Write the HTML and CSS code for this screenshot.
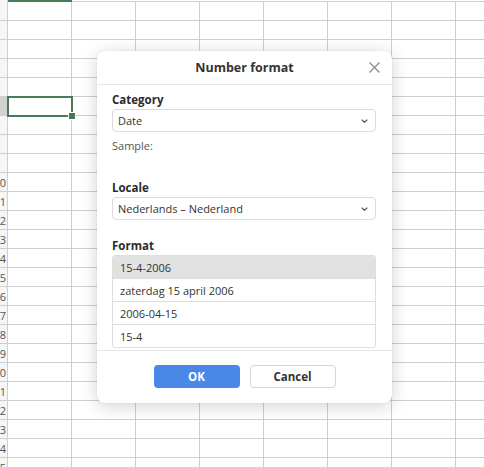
FILE: index.html
```html
<!DOCTYPE html>
<html>
<head>
<meta charset="utf-8">
<link rel="stylesheet" href="styles.css">
</head>
<body>
<div class="sheet">
  <div class="corner"></div>
  <div class="colhead"><div class="ch-sel"></div></div>
  <div class="rowheads">
    <div class="rh"><span>1</span></div>
    <div class="rh"><span>2</span></div>
    <div class="rh"><span>3</span></div>
    <div class="rh"><span>4</span></div>
    <div class="rh"><span>5</span></div>
    <div class="rh rh-sel"><span>6</span></div>
    <div class="rh"><span>7</span></div>
    <div class="rh"><span>8</span></div>
    <div class="rh"><span>9</span></div>
    <div class="rh"><span>10</span></div>
    <div class="rh"><span>11</span></div>
    <div class="rh"><span>12</span></div>
    <div class="rh"><span>13</span></div>
    <div class="rh"><span>14</span></div>
    <div class="rh"><span>15</span></div>
    <div class="rh"><span>16</span></div>
    <div class="rh"><span>17</span></div>
    <div class="rh"><span>18</span></div>
    <div class="rh"><span>19</span></div>
    <div class="rh"><span>20</span></div>
    <div class="rh"><span>21</span></div>
    <div class="rh"><span>22</span></div>
    <div class="rh"><span>23</span></div>
    <div class="rh"><span>24</span></div>
    <div class="rh"><span>25</span></div>
  </div>
  <div class="grid">
    <div class="cell-active"></div>
  </div>
</div>

<div class="dialog">
  <div class="dlg-head">
    <span class="dlg-title">Number format</span>
    <button class="dlg-close" aria-label="Close">
      <svg width="11" height="11" viewBox="0 0 11 11"><path d="M0.5 0.5L10.5 10.5M10.5 0.5L0.5 10.5" stroke="#8a8a8a" stroke-width="1.2" fill="none"/></svg>
    </button>
  </div>
  <div class="dlg-body">
    <div class="label">Category</div>
    <div class="select"><span>Date</span><svg class="chev" width="7" height="4" viewBox="0 0 7 4"><path d="M0.6 0.6L3.5 3.3L6.4 0.6" stroke="#555" stroke-width="1.2" fill="none"/></svg></div>
    <div class="sample">Sample:</div>
    <div class="label label-locale">Locale</div>
    <div class="select"><span>Nederlands – Nederland</span><svg class="chev" width="7" height="4" viewBox="0 0 7 4"><path d="M0.6 0.6L3.5 3.3L6.4 0.6" stroke="#555" stroke-width="1.2" fill="none"/></svg></div>
    <div class="label label-format">Format</div>
    <div class="list">
      <div class="item item-sel">15-4-2006</div>
      <div class="item">zaterdag 15 april 2006</div>
      <div class="item">2006-04-15</div>
      <div class="item">15-4</div>
    </div>
  </div>
  <div class="dlg-foot">
    <button class="btn btn-ok">OK</button>
    <button class="btn btn-cancel">Cancel</button>
  </div>
</div>
</body>
</html>
```
FILE: styles.css
```css
* { box-sizing: border-box; }
html, body { margin: 0; padding: 0; }
body {
  width: 484px;
  height: 467px;
  overflow: hidden;
  background: #fff;
  font-family: "Open Sans", "Noto Sans", sans-serif;
  color: #333;
  position: relative;
}

/* spreadsheet */
.sheet {
  display: grid;
  grid-template-columns: 8px 1fr;
  grid-template-rows: 2px 1fr;
  width: 484px;
  height: 467px;
}
.corner { background: #f6f6f6; border-right: 1px solid #cfcfcf; }
.colhead { border-bottom: 1px solid #cfcfcf; }
.ch-sel { width: 64px; height: 2px; background: #477a57; }

.rowheads {
  display: flex;
  flex-direction: column;
  background: #f6f6f6;
  border-right: 1px solid #cfcfcf;
  overflow: hidden;
}
.rh {
  height: 19px;
  flex: none;
  border-bottom: 1px solid #cfcfcf;
  overflow: hidden;
  display: flex;
  align-items: center;
  font-size: 11px;
  color: #555;
}
.rh span { margin-left: -6.5px; white-space: nowrap; }
.rh-sel { background: #d2d2d2; }

.grid {
  position: relative;
  background-image:
    repeating-linear-gradient(to right, transparent 0, transparent 63px, #cfcfcf 63px, #cfcfcf 64px),
    repeating-linear-gradient(to bottom, transparent 0, transparent 18px, #cfcfcf 18px, #cfcfcf 19px);
}
.cell-active {
  position: absolute;
  left: -1px;
  top: 94px;
  width: 66px;
  height: 21px;
  border: 2px solid #477a57;
}
.cell-active::after {
  content: "";
  position: absolute;
  width: 6px;
  height: 6px;
  right: -4px;
  bottom: -4px;
  background: #477a57;
  outline: 1px solid #fff;
}

/* dialog */
.dialog {
  position: absolute;
  left: 97px;
  top: 51px;
  width: 295px;
  height: 352px;
  background: #fff;
  border-radius: 8px;
  box-shadow: 0 3px 18px rgba(0,0,0,0.18), 0 0 2px rgba(0,0,0,0.08);
  display: flex;
  flex-direction: column;
}
.dlg-head {
  height: 34px;
  flex: none;
  border-bottom: 1px solid #e6e6e6;
  display: flex;
  align-items: center;
  justify-content: center;
  position: relative;
}
.dlg-title { font-weight: 700; font-size: 12.5px; color: #333; }
.dlg-close {
  position: absolute;
  right: 12px;
  top: 11px;
  width: 11px;
  height: 11px;
  padding: 0;
  border: 0;
  background: none;
  display: flex;
}
.dlg-body {
  flex: 1;
  padding: 7px 16px 0 15px;
  display: flex;
  flex-direction: column;
}
.label { font-weight: 700; font-size: 11.5px; line-height: 16px; color: #2b2b2b; }
.label-locale { margin-top: 26px; }
.label-format { margin-top: 18px; }
.select {
  margin-top: 1px;
  height: 23px;
  border: 1px solid #dadada;
  border-radius: 4px;
  display: flex;
  align-items: center;
  justify-content: space-between;
  padding: 0 7px 0 5px;
  font-size: 11px;
  color: #333;
}
.chev { flex: none; }
.sample { margin-top: 6px; font-size: 11px; line-height: 16px; color: #555; }
.list {
  margin-top: 1px;
  border: 1px solid #dedede;
  border-radius: 3px;
  overflow: hidden;
}
.item {
  height: 23px;
  border-bottom: 1px solid #dedede;
  display: flex;
  align-items: center;
  padding-left: 7px;
  font-size: 11px;
  color: #333;
}
.item:last-child { border-bottom: 0; height: 22px; }
.item-sel { background: #e1e1e1; }
.dlg-foot {
  flex: none;
  height: 53px;
  border-top: 1px solid #e6e6e6;
  display: flex;
  justify-content: center;
  align-items: flex-start;
  gap: 10px;
  padding-top: 14px;
}
.btn {
  width: 86px;
  height: 23px;
  border-radius: 4px;
  font-family: inherit;
  font-weight: 700;
  font-size: 11.5px;
  padding: 0;
}
.btn-ok { background: #4a88e8; color: #fff; border: 0; }
.btn-cancel { background: #fff; color: #333; border: 1px solid #d6d6d6; }
```
